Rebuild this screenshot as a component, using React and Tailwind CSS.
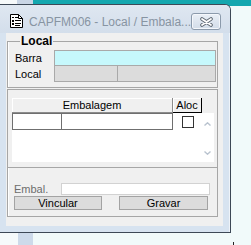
import React from 'react';

const font = { fontFamily: '"Liberation Sans", Arial, sans-serif' };

function NoteIcon() {
  return (
    <svg width="13" height="14" viewBox="0 0 13 14" className="block">
      <path d="M0.5 0.5 H8.5 L12.5 4.5 V13.5 H0.5 Z" fill="#fff" stroke="#000" />
      <path d="M8.5 0.5 V4.5 H12.5" fill="none" stroke="#000" />
      <rect x="2" y="3" width="2" height="1" fill="#000" />
      <rect x="5" y="3" width="3" height="1" fill="#000" />
      <rect x="2" y="6" width="2" height="2" fill="#000" />
      <rect x="5" y="6" width="6" height="1" fill="#000" />
      <rect x="2" y="9" width="2" height="2" fill="#000" />
      <rect x="5" y="9" width="6" height="1" fill="#000" />
      <rect x="5" y="11" width="5" height="1" fill="#000" />
    </svg>
  );
}

function CloseGlyph() {
  return (
    <svg width="13" height="10" viewBox="0 0 13 10" className="block">
      <path d="M2 2 L11 8 M11 2 L2 8" stroke="#5d6670" strokeWidth="3.6" strokeLinecap="round" />
      <path d="M2 2 L11 8 M11 2 L2 8" stroke="#fff" strokeWidth="1.8" strokeLinecap="round" />
    </svg>
  );
}

function Chevron({ up }) {
  return (
    <svg width="7" height="4" viewBox="0 0 7 4" className="block">
      <path d={up ? 'M0.5 3.5 L3.5 0.8 L6.5 3.5' : 'M0.5 0.5 L3.5 3.2 L6.5 0.5'} fill="none" stroke="#b9c3cf" strokeWidth="1.4" />
    </svg>
  );
}

export default function App() {
  return (
    <div className="w-[251px] h-[245px] overflow-hidden bg-[#f1fafa] flex flex-col text-[11px] leading-[13px] text-black" style={font}>
      {/* desktop strip above the window */}
      <div className="h-[4px] flex shrink-0">
        <div className="w-[17px] bg-[#f6f9fa]" />
        <div className="w-[16px] bg-[#c9d5e5]" />
        <div className="flex-1 bg-[#14a7af]" />
      </div>

      <div className="flex h-[229px] shrink-0 bg-[linear-gradient(to_bottom,#14a7af_2px,#f1fafa_2px)]">
        {/* window */}
        <div className="w-[231px] flex flex-col bg-[#d7e3f0] border-t border-r border-b border-[#3d4856] rounded-tr-[6px] shadow-[inset_-1px_1px_0_#eef3f9]">
          {/* title bar */}
          <div className="h-[28px] flex items-start shrink-0 bg-[linear-gradient(to_bottom,#dfe7f1,#d3deeb)] rounded-tr-[5px]">
            <div className="ml-[10px] mt-[9px]"><NoteIcon /></div>
            <div className="ml-[6px] mt-[10px] text-[12px] leading-[14px] text-[#8794a2] whitespace-nowrap">CAPFM006 - Local / Embala...</div>
            <div className="ml-auto mr-[9px] mt-[8px] w-[31px] h-[17px] rounded-[3px] border border-[#8b9aab] bg-[linear-gradient(to_bottom,#e9eff6,#d3dde9)] shadow-[inset_0_0_0_1px_#f4f7fb] flex items-center justify-center">
              <CloseGlyph />
            </div>
          </div>

          {/* client area */}
          <div className="ml-[6px] w-[217px] h-[193px] bg-[#f0f0f0] flex flex-col">
            {/* Local group */}
            <fieldset className="ml-[1px] mt-[2px] w-[211px] border border-[#a6a6a6] pl-[7px] pr-[1px] pt-[2px] pb-[5px] shadow-[inset_1px_0_0_#fff]">
              <legend className="ml-[5px] px-[1px] font-bold text-[12px] leading-[13px]">Local</legend>
              <div className="flex h-[16px]">
                <div className="w-[39px] flex items-center">Barra</div>
                <div className="flex-1 border border-[#a9a9a9] bg-[#c6f8fc]" />
              </div>
              <div className="flex h-[16px]">
                <div className="w-[39px] flex items-center">Local</div>
                <div className="w-[64px] border border-t-0 border-[#a9a9a9] bg-[#dcdcdc]" />
                <div className="flex-1 border border-t-0 border-l-0 border-[#a9a9a9] bg-[#dcdcdc]" />
              </div>
            </fieldset>

            {/* grid group */}
            <fieldset className="ml-[1px] mt-[1px] w-[211px] border border-[#a6a6a6] pl-[4px] pr-[3px] pt-[8px] pb-[5px]">
              <div className="flex h-[15px]">
                <div className="w-[161px] flex items-center justify-center bg-[#f0f0f0] border-r border-b border-[#8c8c8c] shadow-[inset_1px_1px_0_#fff]">Embalagem</div>
                <div className="w-[29px] flex items-center justify-center bg-[#f0f0f0] border-r border-b border-black shadow-[inset_1px_1px_0_#fff]">Aloc</div>
              </div>
              <div className="flex h-[49px] bg-white">
                <div className="w-[191px]">
                  <div className="flex h-[17px]">
                    <div className="w-[50px] border border-[#6f6f6f]" />
                    <div className="w-[111px] border border-l-0 border-[#6f6f6f]" />
                    <div className="flex-1 flex items-center justify-center">
                      <div className="w-[12px] h-[12px] border border-[#333] bg-white" />
                    </div>
                  </div>
                </div>
                <div className="flex-1 flex flex-col items-center justify-between pt-[9px] pb-[7px] pr-[2px]">
                  <Chevron up />
                  <Chevron />
                </div>
              </div>
            </fieldset>

            {/* embal + buttons */}
            <fieldset className="ml-[1px] w-[211px] border border-t-0 border-[#a6a6a6] pl-[6px] pr-[7px] pt-[15px] pb-[6px] shadow-[inset_1px_0_0_#fff]">
              <div className="flex h-[12px]">
                <div className="w-[47px] flex items-center text-[#6d6d6d]">Embal.</div>
                <div className="flex-1 border border-[#d2d2d2] bg-white" />
              </div>
              <div className="flex gap-[17px] h-[14px] mt-[1px]">
                <div className="w-[88px] flex items-center justify-center border border-[#a3a3a3] bg-[#dcdcdc]">Vincular</div>
                <div className="w-[89px] flex items-center justify-center border border-[#a3a3a3] bg-[#dcdcdc]">Gravar</div>
              </div>
            </fieldset>
          </div>
        </div>
        <div className="flex-1" />
      </div>

      {/* desktop strip below */}
      <div className="flex-1 flex">
        <div className="w-[18px] bg-[#f6fafb]" />
        <div className="w-[15px] bg-[#cddaea]" />
        <div className="w-[200px]" />
        <div className="w-[1px] h-[3px] mt-[9px] bg-[#222]" />
      </div>
    </div>
  );
}
